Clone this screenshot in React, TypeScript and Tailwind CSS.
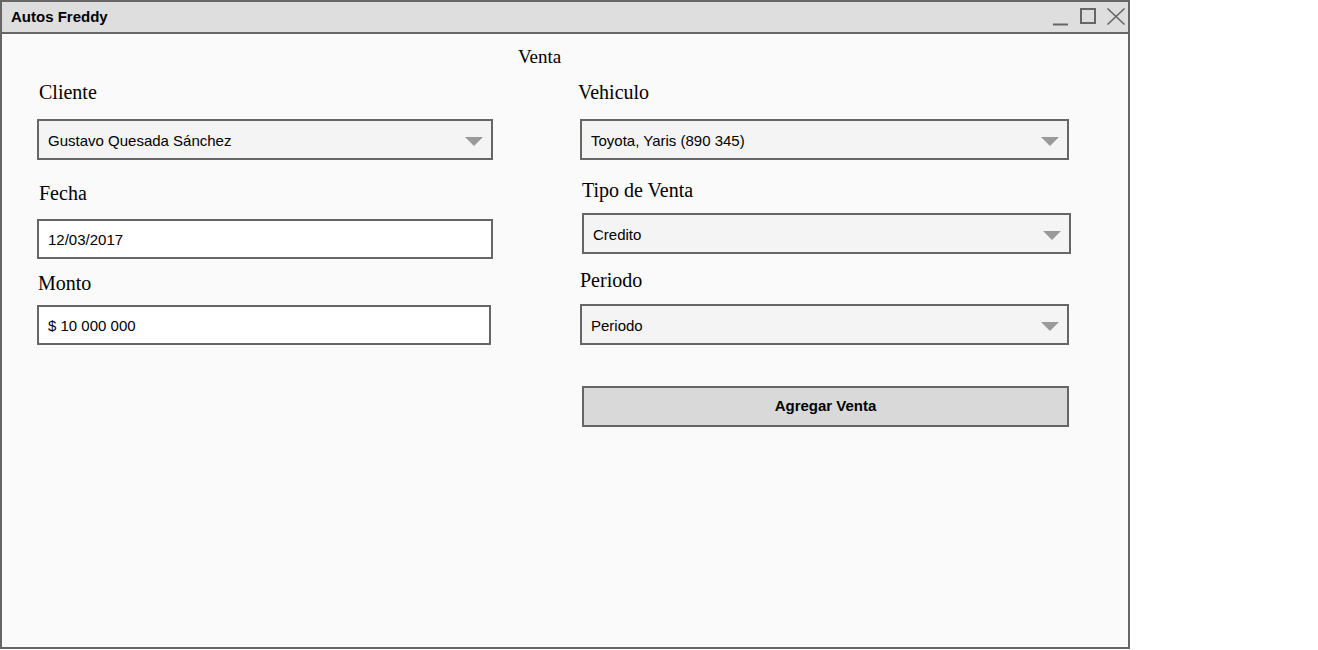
const serif = "font-['Liberation_Serif',serif]";
const sans = "font-['Liberation_Sans',Arial,sans-serif]";

function Label({ text, className = "" }: { text: string; className?: string }) {
    return <div className={`${serif} text-[20px] leading-[22px] text-black ${className}`}>{text}</div>;
}

function Caret() {
    return (
        <svg width="18" height="9" viewBox="0 0 18 9" className="shrink-0">
            <polygon points="0,0 18,0 9,9" fill="#9a9a9a" />
        </svg>
    );
}

function Select({ value, className = "" }: { value: string; className?: string }) {
    return (
        <div
            className={`${sans} flex items-center justify-between border-2 border-[#666] bg-[#f4f4f4] pl-[9px] pr-[8px] pt-[3px] text-[15px] text-black ${className}`}
        >
            <span>{value}</span>
            <Caret />
        </div>
    );
}

function TextBox({ value, className = "" }: { value: string; className?: string }) {
    return (
        <div className={`${sans} flex items-center border-2 border-[#666] bg-white pl-[9px] pt-[3px] text-[15px] text-black ${className}`}>
            {value}
        </div>
    );
}

function WindowControls() {
    return (
        <svg width="78" height="30" viewBox="0 0 78 30" className="ml-auto">
            <line x1="3" y1="22.5" x2="18" y2="22.5" stroke="#666" strokeWidth="2" />
            <rect x="31" y="7" width="14" height="14" fill="none" stroke="#666" strokeWidth="2" />
            <line x1="57.5" y1="6.5" x2="74.5" y2="22.5" stroke="#666" strokeWidth="1.6" />
            <line x1="74.5" y1="6.5" x2="57.5" y2="22.5" stroke="#666" strokeWidth="1.6" />
        </svg>
    );
}

export default function App() {
    return (
        <div className="h-[650px] w-[1318px] bg-white">
            <div className="flex h-[649px] w-[1130px] flex-col border-2 border-[#666] bg-[#fafafa]">
                {/* title bar */}
                <div className="flex h-[32px] shrink-0 items-start border-b-2 border-[#666] bg-[#dedede]">
                    <span className={`${sans} pl-[9px] text-[15px] font-bold leading-[30px] text-black`}>Autos Freddy</span>
                    <WindowControls />
                </div>

                <div className="flex flex-col pt-[12px]">
                    <div className={`${serif} pl-[516px] text-[19px] leading-[21px] text-black`}>Venta</div>

                    <div className="mt-[14px] flex">
                        {/* left column */}
                        <div className="ml-[35px] flex w-[456px] flex-col">
                            <Label text="Cliente" className="ml-[2px]" />
                            <Select value="Gustavo Quesada Sánchez" className="mt-[16px] h-[41px]" />
                            <Label text="Fecha" className="ml-[2px] mt-[22px]" />
                            <TextBox value="12/03/2017" className="mt-[15px] h-[40px]" />
                            <Label text="Monto" className="ml-[1px] mt-[13px]" />
                            <TextBox value="$ 10 000 000" className="mt-[11px] h-[40px] w-[454px] pl-[8px]" />
                        </div>

                        {/* right column */}
                        <div className="ml-[87px] flex w-[491px] flex-col">
                            <Label text="Vehiculo" className="-ml-[2px]" />
                            <Select value="Toyota, Yaris (890 345)" className="mt-[16px] h-[41px] w-[489px]" />
                            <Label text="Tipo de Venta" className="ml-[2px] mt-[19px]" />
                            <Select value="Credito" className="ml-[2px] mt-[12px] h-[41px] w-[489px]" />
                            <Label text="Periodo" className="mt-[15px]" />
                            <Select value="Periodo" className="mt-[13px] h-[41px] w-[489px]" />
                            <button
                                className={`${sans} ml-[2px] mt-[41px] flex h-[41px] w-[487px] items-center justify-center border-2 border-[#666] bg-[#d9d9d9] text-[15px] font-bold text-black`}
                            >
                                Agregar Venta
                            </button>
                        </div>
                    </div>
                </div>
            </div>
        </div>
    );
}
